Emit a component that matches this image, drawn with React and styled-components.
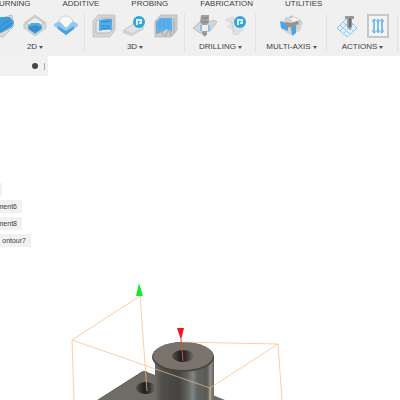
import React from "react";
import styled, { createGlobalStyle } from "styled-components";

const GlobalStyle = createGlobalStyle`
  * { box-sizing: border-box; }
  body {
    margin: 0;
    background: #fff;
    color: #404040;
    font-family: "Liberation Sans", Arial, sans-serif;
    overflow: hidden;
  }
`;

const Page = styled.div`
  display: flex;
  flex-direction: column;
  height: 100vh;
  overflow: hidden;
`;

const Ribbon = styled.header`
  background: #f0f0f0;
  padding-bottom: 4px;
  overflow: hidden;
`;

const Tabs = styled.nav`
  display: flex;
  gap: 32px;
  margin-left: -6px;
  height: 12px;
`;

const Tab = styled.button`
  border: 0;
  padding: 0;
  background: none;
  color: inherit;
  font: 8px/8px "Liberation Sans", Arial, sans-serif;
  height: 8px;
  white-space: nowrap;
`;

const Groups = styled.div`
  display: flex;
  margin-left: -15px;
`;

const Group = styled.section`
  position: relative;
  flex: none;
  display: flex;
  flex-direction: column;
  align-items: center;
  min-width: 71px;
  padding: 2px 7px 0;

  &::after {
    content: "";
    position: absolute;
    top: 2px;
    right: 0;
    width: 1px;
    height: 38px;
    background: #e2e2e2;
  }
`;

const Tools = styled.div`
  display: flex;
  gap: 7px;
`;

const Tool = styled.button`
  width: 24px;
  height: 24px;
  padding: 0;
  border: 0;
  background: none;

  svg { display: block; }
`;

const GroupLabel = styled.button`
  display: flex;
  align-items: center;
  gap: 2px;
  margin-top: 4px;
  padding: 0;
  border: 0;
  background: none;
  color: inherit;
  font: 8px/10px "Liberation Sans", Arial, sans-serif;
  white-space: nowrap;
`;

const Caret = styled.span`
  border: 2px solid transparent;
  border-top: 3px solid #555;
  border-bottom: 0;
`;

const Workspace = styled.main`
  position: relative;
  flex: 1;
  min-height: 0;
`;

const BrowserBar = styled.div`
  display: flex;
  align-items: center;
  justify-content: flex-end;
  gap: 6px;
  width: 48px;
  height: 20px;
  padding-right: 3px;
  background: #f1f1f1;
`;

const Dot = styled.button`
  width: 6px;
  height: 6px;
  padding: 0;
  border: 0;
  border-radius: 50%;
  background: #444;
`;

const Grip = styled.span`
  width: 1px;
  height: 7px;
  background: #aaa;
`;

const Tree = styled.ul`
  display: flex;
  flex-direction: column;
  align-items: flex-start;
  gap: 4px;
  margin: 107px 0 0;
  padding: 0;
  list-style: none;
`;

const TreeItem = styled.li`
  display: flex;
  justify-content: flex-end;
  width: ${(props) => props.$visible}px;
  height: 13px;
  padding-right: ${(props) => (props.$visible > 8 ? 5 : 0)}px;
  overflow: hidden;
  background: #f1f1f1;
  font-size: 7px;
  line-height: 13px;
  white-space: nowrap;
`;

const Canvas = styled.svg`
  position: absolute;
  left: 60px;
  bottom: 0;
`;

const Icon = ({ children }) => (
  <svg width="24" height="24" viewBox="0 0 24 24" fill="none" aria-hidden="true">
    {children}
  </svg>
);

const FaceIcon = () => (
  <Icon>
    <path d="M1 14 13 3 20 1 22 12 11 23 2 21Z" fill="#dcdcdc" stroke="#c0c0c0" />
    <path d="M1 7 9 3 18 3 22 8 20 13 9 19 1 17Z" fill="#409ddb" />
    <path d="M4 15 18 6M8 17 20 9" stroke="#338fcd" />
  </Icon>
);

const PocketIcon = () => (
  <Icon>
    <path d="M1 9 12 1 23 9V14L12 22 1 14Z" fill="#d6d6d6" stroke="#c8c8c8" />
    <path d="M3 9 12 3 21 9 12 14Z" fill="#ededed" stroke="#c0c0c0" />
    <path d="M5 12 8 9H16L19 12V15L12 20 5 15Z" fill="#55aae2" />
    <path d="M6 13 12 11 18 13V15L12 19 6 15Z" fill="#348fce" />
  </Icon>
);

const ContourIcon = () => (
  <Icon>
    <path d="M0 10 5 7 12 14 19 7 24 10V12L12 21 0 12Z" fill="#93cbf0" />
    <path d="M4 12 12 17 20 12V15L12 21 4 15Z" fill="#48a2df" />
    <path d="M5 7Q7 2 12 2T19 7L12 14Z" fill="#f8f8f8" stroke="#cfcfcf" />
  </Icon>
);

const AdaptiveIcon = () => (
  <Icon>
    <path d="M1 7 6 1H23V16L18 23H1Z" fill="#d5d5d5" stroke="#c4c4c4" />
    <path d="M4 8 8 4H21V15L17 19H4Z" fill="#e7e7e7" stroke="#b8b8b8" />
    <path d="M7 6Q14 4 20 5V16Q13 15 7 17Z" fill="#55acea" />
    <path d="M9 8 19 7M9 12H18M9 15 18 14" stroke="#2f86c3" />
  </Icon>
);

const Badge = ({ cx, cy }) => (
  <g>
    <circle cx={cx} cy={cy} r="6" fill="#31a5dc" />
    <path d={`M${cx - 2} ${cy + 3}V${cy - 2}H${cx + 2}V${cy + 1}H${cx}`} stroke="#d8effa" strokeWidth="2" />
  </g>
);

const FlatIcon = () => (
  <Icon>
    <path d="M0 16 12 8 21 13V15L9 22 0 19Z" fill="#d0d0d0" />
    <path d="M2 16 12 10 19 14 9 19Z" fill="#e3e3e3" />
    <Badge cx={16} cy={8} />
  </Icon>
);

const SteepIcon = () => (
  <Icon>
    <path d="M1 7 7 1H23V16L17 23H1Z" fill="#cbcbcb" stroke="#c0c0c0" />
    <path d="M2 8 6 4H18V18L13 15 8 18 2 20Z" fill="#5cafe9" />
    <path d="M2 20Q5 12 8 19T13 19T17 22M20 5V20" stroke="#a8a8a8" />
    <path d="M6 7V15M10 6V15M14 6V15" stroke="#4a9fdc" />
  </Icon>
);

const DrillIcon = () => (
  <Icon>
    <path d="M0 14 7 8 12 11 20 6 24 8 17 17 7 19Z" fill="#d6d6d6" stroke="#bcbcbc" />
    <path d="M8 1H16V8L14 11V20L12 23 9 20V11L7 8Z" fill="#a1a1a1" />
    <path d="M9 4H15M9 8H15M10 20H14" stroke="#808080" />
    <path d="M9 11H15V17H9Z" fill="#eee" />
    <path d="M8 11V17M16 11V17" stroke="#82c4f0" strokeWidth="2" />
  </Icon>
);

const HoleIcon = () => (
  <Icon>
    <path d="M1 5 9 2 14 10 21 15 13 22 7 20 9 16 2 13 7 9Z" fill="#e0e0e0" />
    <path d="M2 6 10 10 8 15 12 20" stroke="#c5c5c5" strokeDasharray="3 2" />
    <Badge cx={16} cy={8} />
  </Icon>
);

const MultiIcon = () => (
  <Icon>
    <path d="M1 8 12 1 23 8 20 17 11 21 2 16Z" fill="#d4d4d4" />
    <path d="M5 5Q12 0 21 7L15 15" stroke="#b5b5b5" strokeDasharray="3 2" />
    <path d="M0 7 8 10V17L1 14ZM11 14 16 11V19L12 22Z" fill="#48a5e3" />
    <path d="M5 8 12 9 17 6 19 9 13 14 7 13Z" fill="#949494" />
    <path d="M10 5 14 3 19 6 14 8Z" fill="#f5f5f5" />
  </Icon>
);

const PostIcon = () => (
  <Icon>
    <path d="M2 14 12 4 22 14 12 23Z" fill="#e1f0fa" stroke="#8dc8ec" />
    <path d="M5 11 15 20M8 8 18 17M5 17 15 7M8 20 18 10" stroke="#97cdee" />
    <path d="M10 2H19V5H17V13L15 16 12 13V5H10Z" fill="#999" />
    <path d="M15 4V13" stroke="#6c6c6c" strokeWidth="2" />
  </Icon>
);

const SetupIcon = () => (
  <Icon>
    <path d="M2 1H22V23H2Z" fill="#f4f4f4" stroke="#c8c8c8" strokeWidth="2" />
    <path d="M8 5V19M12 5V19M16 5V19" stroke="#7cc0ef" strokeWidth="2" />
    <path d="M6 8 8 5 12 8 16 5 18 8M6 16 8 19 12 16 16 19 18 16" stroke="#64b5ed" />
  </Icon>
);

const tabs = ["TURNING", "ADDITIVE", "PROBING", "FABRICATION", "UTILITIES"];

const groups = [
  { label: "2D", icons: [FaceIcon, PocketIcon, ContourIcon] },
  { label: "3D", icons: [AdaptiveIcon, FlatIcon, SteepIcon] },
  { label: "DRILLING", icons: [DrillIcon, HoleIcon] },
  { label: "MULTI-AXIS", icons: [MultiIcon] },
  { label: "ACTIONS", icons: [PostIcon, SetupIcon] },
];

const treeItems = [
  { text: "", visible: 2 },
  { text: "ment6", visible: 22 },
  { text: "ment8", visible: 22 },
  { text: "ontour7", visible: 31 },
];

const Model = () => (
  <Canvas width="240" height="130" viewBox="60 270 240 130" aria-label="Part model">
    <defs>
      <linearGradient id="shaft">
        <stop offset="0" stopColor="#6b6a65" />
        <stop offset="0.12" stopColor="#504f4b" />
        <stop offset="0.4" stopColor="#444340" />
        <stop offset="0.54" stopColor="#5e5f5b" />
        <stop offset="0.64" stopColor="#7f8784" />
        <stop offset="0.72" stopColor="#62635f" />
        <stop offset="0.88" stopColor="#5a5955" />
        <stop offset="0.94" stopColor="#8f8f89" />
        <stop offset="1" stopColor="#66655f" />
      </linearGradient>
      <linearGradient id="bore">
        <stop offset="0" stopColor="#55524e" />
        <stop offset="0.4" stopColor="#1f1f1f" />
        <stop offset="0.65" stopColor="#34312e" />
        <stop offset="1" stopColor="#77736b" />
      </linearGradient>
    </defs>
    <path d="M98 400 142 372Q144 371 147 372L172 381 215 396 225 400Z" fill="#6f6b65" />
    <path d="M98 400 142 372Q144 371 147 372" fill="none" stroke="#5c5954" />
    <ellipse cx="146" cy="388" rx="10" ry="6" fill="url(#bore)" />
    <path d="M155 357V400H214V357Z" fill="url(#shaft)" />
    <ellipse cx="183" cy="357" rx="31" ry="15" fill="#464541" />
    <ellipse cx="183" cy="356" rx="30" ry="14" fill="#79736b" />
    <ellipse cx="183" cy="356" rx="11" ry="6" fill="url(#bore)" />
    <g fill="none" stroke="#f8b980" strokeOpacity="0.7">
      <path d="M74 400 72 340 140 296 147 391M72 340 210 388 278 344 282 400M278 344 181 342M210 388V400" />
    </g>
    <path d="M181 339 183 361" stroke="#c65335" />
    <path d="M136 296 139 283 143 296Z" fill="#16e62c" />
    <path d="M177 328H184L181 340Z" fill="#f51422" />
  </Canvas>
);

const App = () => (
  <>
    <GlobalStyle />
    <Page>
      <Ribbon>
        <Tabs>
          {tabs.map((tab) => (
            <Tab key={tab}>{tab}</Tab>
          ))}
        </Tabs>
        <Groups>
          {groups.map(({ label, icons }) => (
            <Group key={label}>
              <Tools>
                {icons.map((ToolIcon, i) => (
                  <Tool key={i} aria-label={`${label} ${i + 1}`}>
                    <ToolIcon />
                  </Tool>
                ))}
              </Tools>
              <GroupLabel>
                {label}
                <Caret />
              </GroupLabel>
            </Group>
          ))}
        </Groups>
      </Ribbon>
      <Workspace>
        <BrowserBar>
          <Dot aria-label="Browser options" />
          <Grip />
        </BrowserBar>
        <Tree>
          {treeItems.map((item, i) => (
            <TreeItem key={i} $visible={item.visible}>
              {item.text}
            </TreeItem>
          ))}
        </Tree>
        <Model />
      </Workspace>
    </Page>
  </>
);

export default App;
